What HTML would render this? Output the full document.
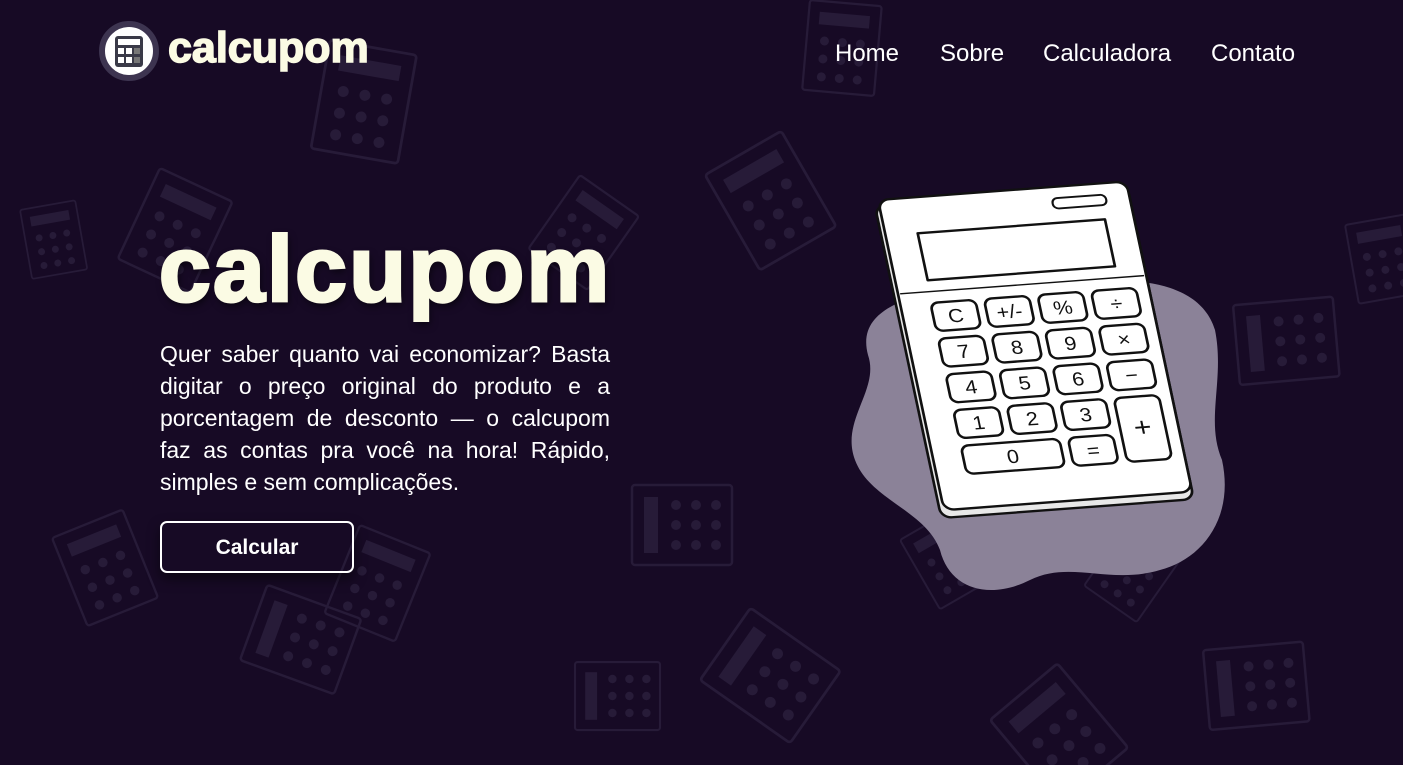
<!DOCTYPE html>
<html><head><meta charset="utf-8"><style>
*{margin:0;padding:0;box-sizing:border-box}
html,body{width:1403px;height:765px;overflow:hidden}
body{background:#170a25;font-family:"Liberation Sans",sans-serif;position:relative}
#bg{position:absolute;left:0;top:0;display:block}
.nav a{position:absolute;top:40px;color:#fff;font-size:24px;text-decoration:none}
.logo{position:absolute;left:168px;top:24px;font-size:43px;font-weight:bold;color:#fbfbe4;letter-spacing:0;-webkit-text-stroke:1.5px #fbfbe4}
h1{position:absolute;left:159px;top:216px;font-size:93px;font-weight:bold;color:#fbfbe4;letter-spacing:2.3px;-webkit-text-stroke:3px #fbfbe4;text-shadow:2px 4px 8px rgba(0,0,0,.6)}
p{position:absolute;left:160px;top:338px;width:450px;color:#fff;font-size:23px;line-height:32px;text-align:justify}
.btn{position:absolute;left:160px;top:521px;width:194px;height:52px;border:2px solid #fff;border-radius:7px;color:#fff;font-weight:bold;font-size:21px;text-align:center;line-height:50px;box-shadow:0 6px 12px rgba(0,0,0,.5)}
</style></head><body>
<svg id="bg" width="1403" height="765" viewBox="0 0 1403 765">
<defs>
<g id="ic" fill="none" stroke="#271b38" stroke-width="2.5">
<rect x="0" y="0" width="80" height="100" rx="3"/>
<rect x="12" y="12" width="56" height="14" fill="#271b38" stroke="none"/>
<g fill="#271b38" stroke="none">
<circle cx="20" cy="44" r="5"/><circle cx="40" cy="44" r="5"/><circle cx="60" cy="44" r="5"/>
<circle cx="20" cy="64" r="5"/><circle cx="40" cy="64" r="5"/><circle cx="60" cy="64" r="5"/>
<circle cx="20" cy="84" r="5"/><circle cx="40" cy="84" r="5"/><circle cx="60" cy="84" r="5"/></g>
</g>
</defs>
<use href="#ic" transform="translate(52,538) rotate(-22) scale(.95)"/>
<use href="#ic" transform="translate(240,660) rotate(-70)"/>
<use href="#ic" transform="translate(160,168) rotate(25)"/>
<use href="#ic" transform="translate(20,210) rotate(-10) scale(.7)"/>
<use href="#ic" transform="translate(580,175) rotate(35) scale(.9)"/>
<use href="#ic" transform="translate(705,175) rotate(-30) scale(1.1)"/>
<use href="#ic" transform="translate(360,525) rotate(22) scale(.95)"/>
<use href="#ic" transform="translate(632,565) rotate(-90)"/>
<use href="#ic" transform="translate(575,730) rotate(-90) scale(.85)"/>
<use href="#ic" transform="translate(700,680) rotate(-55) scale(1.1)"/>
<use href="#ic" transform="translate(990,720) rotate(-40) scale(1.1)"/>
<use href="#ic" transform="translate(1210,730) rotate(-95)"/>
<use href="#ic" transform="translate(1240,385) rotate(-95)"/>
<use href="#ic" transform="translate(1345,225) rotate(-10) scale(.8)"/>
<use href="#ic" transform="translate(900,540) rotate(-30) scale(.8)"/>
<use href="#ic" transform="translate(1130,520) rotate(35) scale(.8)"/>
<use href="#ic" transform="translate(330,40) rotate(10) scale(1.1)"/>
<use href="#ic" transform="translate(810,0) rotate(5) scale(.9)"/>
<path d="M905 300 C960 270 1010 300 1070 285 C1130 275 1200 280 1215 330 C1225 380 1205 420 1222 460 C1235 520 1200 560 1160 570 C1110 585 1070 560 1030 580 C990 600 950 590 940 550 C925 510 870 500 855 460 C840 420 880 390 868 355 C860 325 880 310 905 300Z" fill="#8b8298"/>
<g transform="matrix(1.07,-0.08,0.2,0.94,878,200)" stroke="#111" stroke-width="2.5" stroke-linejoin="round">
<rect x="-4" y="6" width="236" height="332" rx="10" fill="#e8e8e8"/>
<rect x="0" y="0" width="232" height="330" rx="10" fill="#fff"/>
<rect x="30" y="38" width="175" height="50" fill="#fff"/>
<line x1="2" y1="100" x2="230" y2="100" stroke-width="1.5"/>
<rect x="160" y="12" width="50" height="11" rx="5" fill="#fff" stroke-width="2"/>
<g fill="#fff">
<rect x="28" y="112" width="42" height="30" rx="7"/><rect x="78" y="112" width="42" height="30" rx="7"/><rect x="128" y="112" width="42" height="30" rx="7"/><rect x="178" y="112" width="42" height="30" rx="7"/>
<rect x="28" y="150" width="42" height="30" rx="7"/><rect x="78" y="150" width="42" height="30" rx="7"/><rect x="128" y="150" width="42" height="30" rx="7"/><rect x="178" y="150" width="42" height="30" rx="7"/>
<rect x="28" y="188" width="42" height="30" rx="7"/><rect x="78" y="188" width="42" height="30" rx="7"/><rect x="128" y="188" width="42" height="30" rx="7"/><rect x="178" y="188" width="42" height="30" rx="7"/>
<rect x="28" y="226" width="42" height="30" rx="7"/><rect x="78" y="226" width="42" height="30" rx="7"/><rect x="128" y="226" width="42" height="30" rx="7"/><rect x="178" y="226" width="42" height="68" rx="7"/>
<rect x="28" y="264" width="92" height="30" rx="7"/><rect x="128" y="264" width="42" height="30" rx="7"/>
</g>
<g fill="#111" stroke="none" font-family="Liberation Sans,sans-serif" font-size="20" text-anchor="middle">
<text x="49" y="134">C</text><text x="99" y="134">+/-</text><text x="149" y="134">%</text><text x="199" y="134">÷</text>
<text x="49" y="172">7</text><text x="99" y="172">8</text><text x="149" y="172">9</text><text x="199" y="172">×</text>
<text x="49" y="210">4</text><text x="99" y="210">5</text><text x="149" y="210">6</text><text x="199" y="210">−</text>
<text x="49" y="248">1</text><text x="99" y="248">2</text><text x="149" y="248">3</text><text x="199" y="268" font-size="28">+</text>
<text x="74" y="286">0</text><text x="149" y="286">=</text>
</g>
</g>
<circle cx="129" cy="51" r="27" fill="#fff" stroke="#3d3450" stroke-width="6"/>
<rect x="115" y="36" width="28" height="31" rx="3" fill="#3a3a48"/>
<rect x="118" y="39" width="22" height="6" fill="#fff"/>
<g fill="#fff"><rect x="118" y="48" width="6" height="6"/><rect x="126" y="48" width="6" height="6"/><rect x="134" y="48" width="6" height="6" fill="#777"/><rect x="118" y="57" width="6" height="6"/><rect x="126" y="57" width="6" height="6"/><rect x="134" y="57" width="6" height="6" fill="#777"/></g>
</svg>
<div class="logo">calcupom</div>
<div class="nav"><a style="left:835px">Home</a><a style="left:940px">Sobre</a><a style="left:1043px">Calculadora</a><a style="left:1211px">Contato</a></div>
<h1>calcupom</h1>
<p>Quer saber quanto vai economizar? Basta digitar o preço original do produto e a porcentagem de desconto — o calcupom faz as contas pra você na hora! Rápido, simples e sem complicações.</p>
<div class="btn">Calcular</div>
</body></html>
